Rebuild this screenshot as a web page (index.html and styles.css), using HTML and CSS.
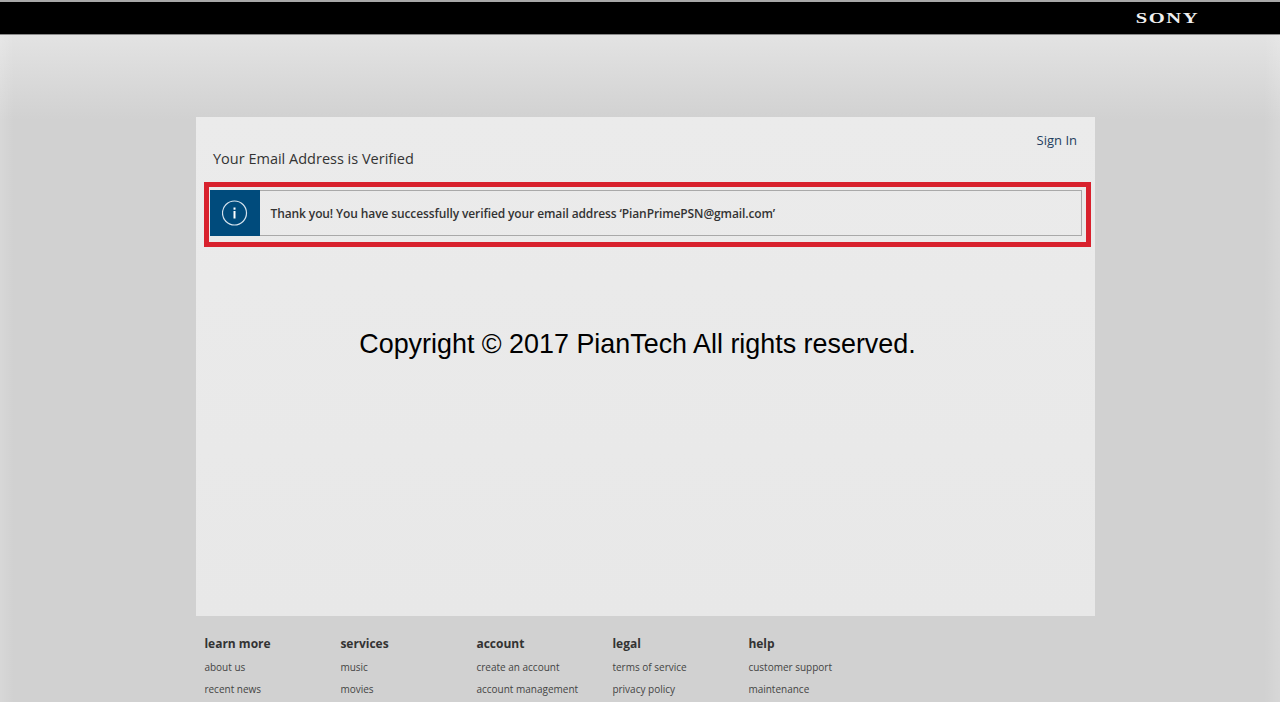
FILE: index.html
```html
<!DOCTYPE html>
<html lang="en">

<head>
    <meta charset="UTF-8">
    <title>Your Email Address is Verified</title>
    <link rel="stylesheet" href="styles.css">
</head>

<body>
    <header class="topBar">
        <span class="logo">SONY</span>
    </header>
    <main class="page">
        <section class="card">
            <div class="cardHead">
                <h1>Your Email Address is Verified</h1>
                <a href="#" class="signIn">Sign In</a>
            </div>
            <div class="highlight">
                <div class="notice">
                    <div class="noticeIcon">
                        <svg width="26" height="26" viewBox="0 0 26 26">
                            <circle cx="12.5" cy="13" r="12" fill="none" stroke="#d5e3ee" stroke-width="1.2" />
                            <rect x="11.5" y="7.5" width="2" height="2.2" fill="#ffffff" />
                            <rect x="11.5" y="11" width="2" height="7.5" fill="#ffffff" />
                        </svg>
                    </div>
                    <p>Thank you! You have successfully verified your email address ‘PianPrimePSN@gmail.com’</p>
                </div>
            </div>
            <p class="copyright">Copyright © 2017 PianTech All rights reserved.</p>
        </section>
        <footer class="links">
            <div class="linkCol">
                <h2>learn more</h2>
                <a href="#">about us</a>
                <a href="#">recent news</a>
            </div>
            <div class="linkCol">
                <h2>services</h2>
                <a href="#">music</a>
                <a href="#">movies</a>
            </div>
            <div class="linkCol">
                <h2>account</h2>
                <a href="#">create an account</a>
                <a href="#">account management</a>
            </div>
            <div class="linkCol">
                <h2>legal</h2>
                <a href="#">terms of service</a>
                <a href="#">privacy policy</a>
            </div>
            <div class="linkCol">
                <h2>help</h2>
                <a href="#">customer support</a>
                <a href="#">maintenance</a>
            </div>
        </footer>
    </main>
</body>

</html>
```

FILE: styles.css
```css
html,
body {
    margin: 0;
    height: 702px;
    overflow: hidden;
}

body {
    font-family: "Open Sans", sans-serif;
    color: #333;
    background: #d1d1d1;
}

.topBar {
    height: 32px;
    background: #000;
    border-top: 2px solid #a8a8a8;
    border-bottom: 1px solid #8a8a8a;
    display: flex;
    align-items: center;
    justify-content: flex-end;
    padding-right: 81px;
}

.logo {
    margin-top: 1px;
    font-family: "Liberation Serif", serif;
    font-weight: bold;
    font-size: 14px;
    letter-spacing: 1.1px;
    color: #f0f0f0;
    transform: scaleX(1.47);
    transform-origin: right center;
}

.page {
    height: 667px;
    padding: 82px 185px 0 196px;
    box-sizing: border-box;
    background:
        linear-gradient(90deg, rgba(255, 255, 255, 0.14) 0, rgba(255, 255, 255, 0) 14px, rgba(255, 255, 255, 0) 1264px, rgba(255, 255, 255, 0.14) 100%),
        linear-gradient(180deg, #e3e3e3 0, #d1d1d1 85px);
}

.card {
    height: 499px;
    background: linear-gradient(180deg, #ebebeb 0, #e8e8e8 100%);
    padding: 0 4px 0 8px;
    box-sizing: border-box;
}

.cardHead {
    height: 65px;
    display: flex;
    justify-content: space-between;
    padding: 0 14px 0 9px;
}

h1 {
    margin: 32px 0 0;
    font-size: 14.5px;
    line-height: 20px;
    font-weight: 400;
    color: #333;
}

.signIn {
    margin-top: 13px;
    height: 20px;
    font-size: 13px;
    line-height: 20px;
    color: #1f3f60;
    text-decoration: none;
}

.highlight {
    height: 65px;
    border: 5px solid #d8212d;
    box-sizing: border-box;
    padding: 3px 4px 6px 1px;
}

.notice {
    height: 100%;
    box-sizing: border-box;
    display: flex;
    align-items: center;
    border: 1px solid #a9a9a9;
    border-left: none;
}

.noticeIcon {
    width: 50px;
    height: 46px;
    margin-top: -1px;
    margin-bottom: -1px;
    background: #004b7c;
    display: flex;
    align-items: center;
    justify-content: center;
}

.notice p {
    margin: 0 0 0 10.5px;
    font-size: 12px;
    letter-spacing: -0.11px;
    font-weight: 600;
    color: #333;
}

.copyright {
    margin: 82px 20px 0 0;
    font-family: "Liberation Sans", sans-serif;
    font-size: 26.9px;
    line-height: 30px;
    text-align: center;
    color: #000;
}

.links {
    display: flex;
    padding: 19px 0 0 8.4px;
}

.linkCol {
    width: 136px;
    flex: none;
    display: flex;
    flex-direction: column;
}

.linkCol h2 {
    margin: 0 0 3px;
    font-size: 12px;
    line-height: 18px;
    font-weight: 700;
    color: #333;
}

.linkCol a {
    font-size: 10px;
    line-height: 22px;
    color: #444;
    text-decoration: none;
}
```
